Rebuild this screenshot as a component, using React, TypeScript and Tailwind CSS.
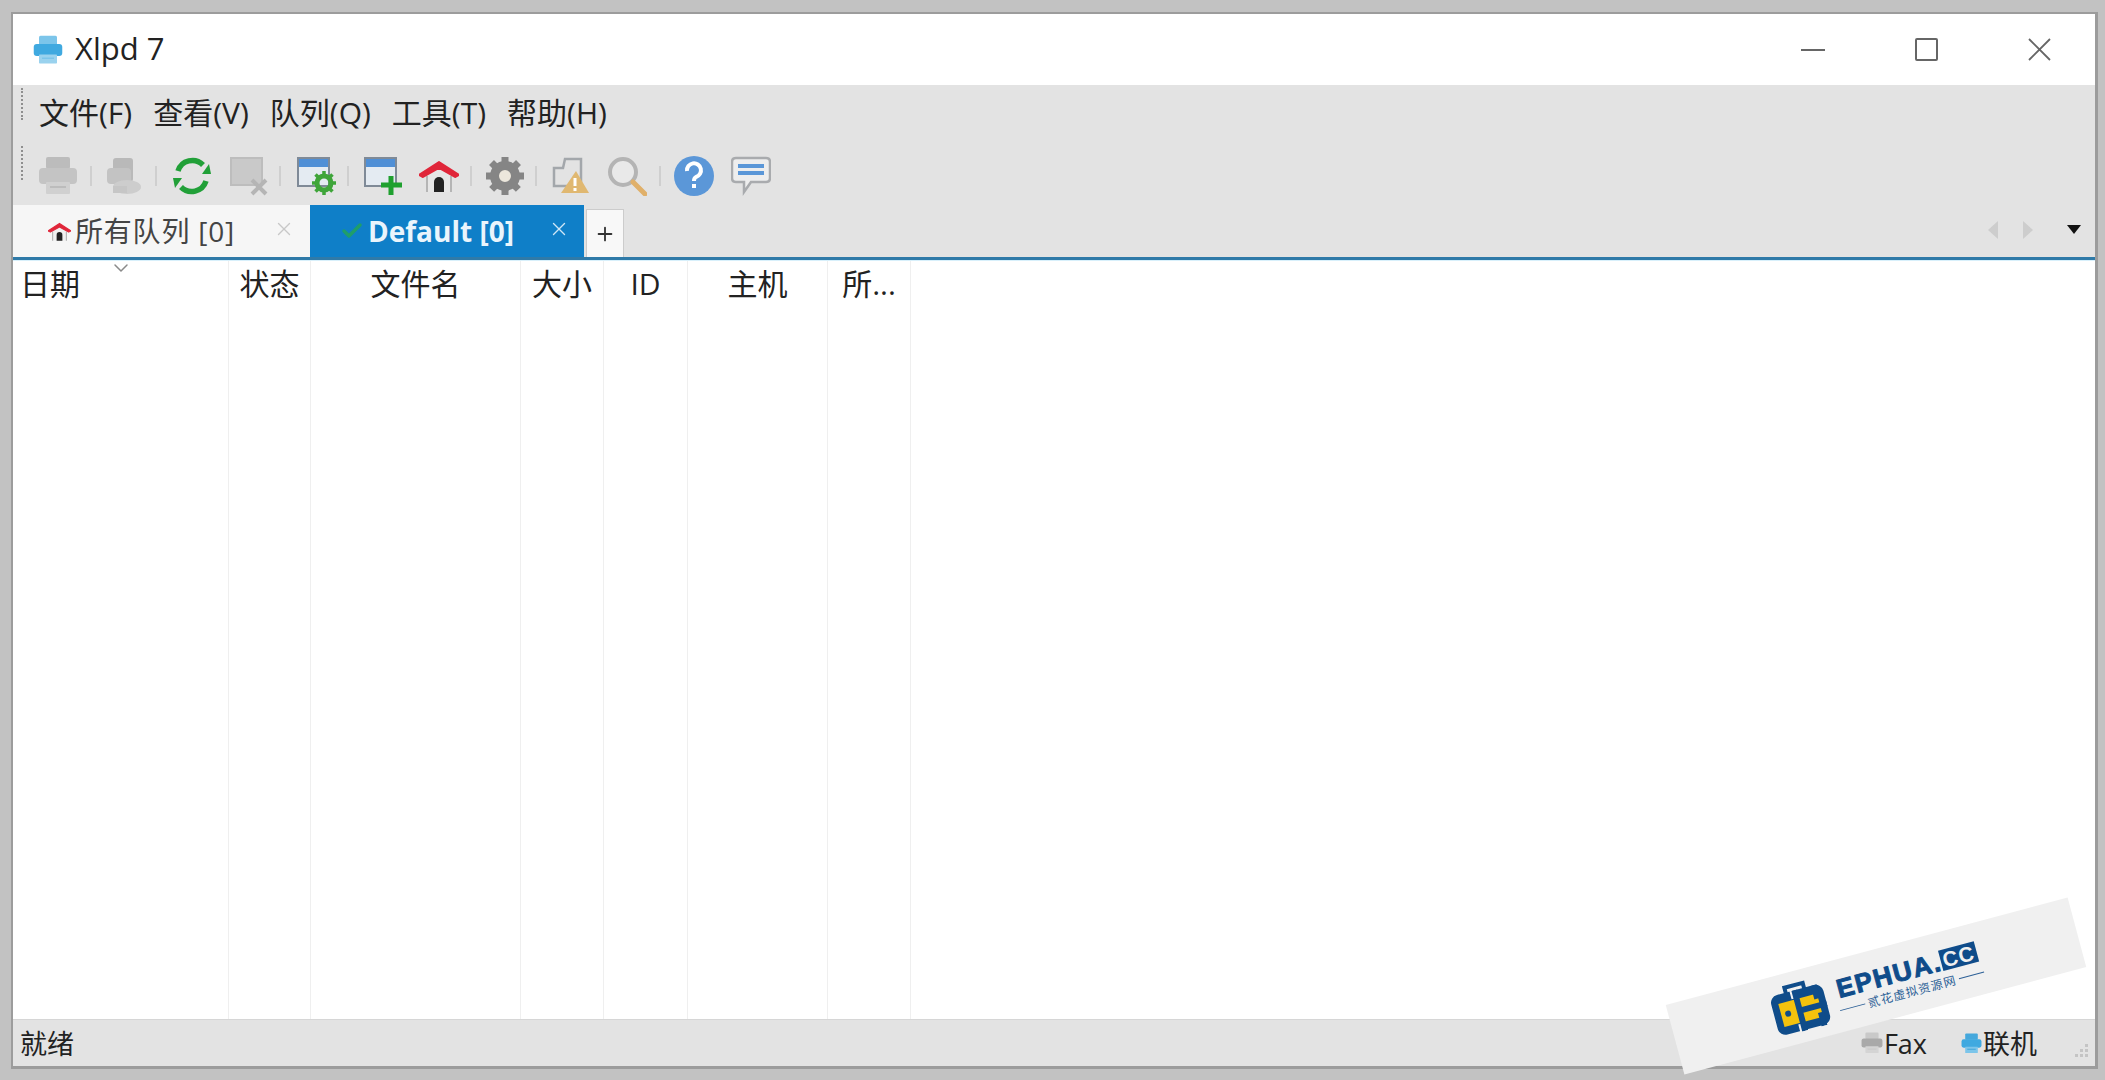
import React from 'react';
import { Check, ChevronDown, Plus, X } from 'lucide-react';

const FONT = '"Open Sans", "Noto Sans CJK SC", sans-serif';

const PrinterIcon = ({ size = 40, body = '#c4c4c4', top = '#bcbcbc', paper = '#d0d0d0' }: { size?: number; body?: string; top?: string; paper?: string }) => (
    <svg width={size} height={size} viewBox="0 0 40 40">
        <rect x="8" y="1" width="24" height="12" rx="2" fill={top} />
        <rect x="1" y="12" width="38" height="16" rx="4" fill={body} />
        <rect x="8" y="26" width="24" height="12" rx="1" fill={paper} />
        <rect x="12" y="30" width="16" height="2" fill={top} />
    </svg>
);

const PrintersIcon = () => (
    <svg width="40" height="40" viewBox="0 0 40 40">
        <rect x="10" y="2" width="20" height="24" rx="3" fill="#b9b9b9" />
        <rect x="4" y="12" width="24" height="16" rx="4" fill="#c3c3c3" />
        <ellipse cx="24" cy="31" rx="14" ry="7" fill="#cdcdcd" />
        <rect x="10" y="30" width="14" height="7" fill="#c6c6c6" />
    </svg>
);

const RefreshIcon = () => (
    <svg width="40" height="40" viewBox="0 0 40 40" fill="none" stroke="#21a038" strokeWidth="5.5">
        <path d="M6 15 A15 15 0 0 1 31 9" />
        <path d="M34 25 A15 15 0 0 1 9 31" />
        <path d="M30 18 L39 18 L37 8 Z" fill="#21a038" stroke="none" />
        <path d="M1 22 L10 22 L3 32 Z" fill="#21a038" stroke="none" />
    </svg>
);

const DeleteJobIcon = () => (
    <svg width="40" height="40" viewBox="0 0 40 40" fill="none">
        <rect x="1" y="2" width="31" height="27" fill="#c9c9c9" stroke="#bdbdbd" strokeWidth="2" />
        <path d="M22 24 L36 38 M36 24 L22 38" stroke="#b5b5b5" strokeWidth="4" />
    </svg>
);

const WindowBase = () => (
    <>
        <rect x="1" y="2" width="31" height="28" fill="#e4ebf2" stroke="#7f8a97" strokeWidth="2" />
        <rect x="2" y="3" width="29" height="8" fill="#4f8fd6" />
    </>
);

const WindowGearIcon = () => (
    <svg width="40" height="40" viewBox="0 0 40 40" fill="none">
        <WindowBase />
        <circle cx="27" cy="27" r="7" stroke="#3fa53a" strokeWidth="5" />
        <path d="M27 15 V39 M15 27 H39 M18.5 18.5 L35.5 35.5 M35.5 18.5 L18.5 35.5" stroke="#3fa53a" strokeWidth="3.5" strokeDasharray="4 16" />
    </svg>
);

const WindowAddIcon = () => (
    <svg width="40" height="40" viewBox="0 0 40 40" fill="none">
        <WindowBase />
        <path d="M27 20 V39 M17 29 H38" stroke="#1fa02f" strokeWidth="5" />
    </svg>
);

const HomeIcon = ({ size = 40, wall = '#e6e6e6' }: { size?: number; wall?: string }) => (
    <svg width={size} height={size} viewBox="0 0 40 40" fill="none">
        <path d="M7 19 L20 10 L33 19 V36 H7 Z" fill={wall} />
        <path d="M8 20 V36 M32 20 V36" stroke="#b5b5b5" strokeWidth="2" />
        <path d="M0 19 L20 6 L40 19 L36 21 L20 12 L4 21 Z" fill="#e0263a" stroke="#e0263a" strokeWidth="2" strokeLinejoin="round" />
        <path d="M15 36 V26 A5 5 0 0 1 25 26 V36 Z" fill="#222222" />
    </svg>
);

const GearIcon = () => (
    <svg width="40" height="40" viewBox="0 0 40 40" fill="none">
        <circle cx="20" cy="20" r="10.5" fill="#ece7dc" stroke="#858585" strokeWidth="9" />
        <path d="M20 1 V39 M1 20 H39 M6.5 6.5 L33.5 33.5 M33.5 6.5 L6.5 33.5" stroke="#858585" strokeWidth="7" strokeDasharray="7 24" />
    </svg>
);

const WarnDocIcon = () => (
    <svg width="40" height="40" viewBox="0 0 40 40" fill="none">
        <path d="M3 12 L12 12 L14 3 L30 3 V30 H3 Z" stroke="#a3a7ab" strokeWidth="2.5" />
        <path d="M25 15 L38 37 H10 Z" fill="#e0b871" />
        <path d="M24 22 V30 M24 32 V35" stroke="#fff" strokeWidth="3" />
    </svg>
);

const SearchIcon = () => (
    <svg width="40" height="40" viewBox="0 0 40 40" fill="none">
        <circle cx="16" cy="16" r="13" stroke="#b4b4b4" strokeWidth="4" fill="#e9e9e9" />
        <path d="M26 26 L38 38" stroke="#e0b06a" strokeWidth="5" strokeLinecap="round" />
    </svg>
);

const HelpIcon = () => (
    <svg width="40" height="40" viewBox="0 0 40 40">
        <circle cx="20" cy="20" r="20" fill="#5b97d8" />
        <path d="M13 15 A7 7 0 1 1 22 21 Q20 22 20 25" fill="none" stroke="#fff" strokeWidth="4" />
        <rect x="18" y="28" width="4" height="4" fill="#fff" />
    </svg>
);

const ChatIcon = () => (
    <svg width="40" height="40" viewBox="0 0 40 40" fill="none">
        <path d="M5 2 H35 Q39 2 39 6 V22 Q39 26 35 26 H20 L13 36 V26 H5 Q1 26 1 22 V6 Q1 2 5 2 Z" fill="#eeeeee" stroke="#a9abae" strokeWidth="2.5" />
        <path d="M7 10 H33 M7 17 H33" stroke="#5b97d8" strokeWidth="4" />
    </svg>
);

const Gripper = () => (
    <div className="h-full w-[2px] border-l-2 border-dotted border-[#8f8f8f]" />
);

const Sep = ({ className }: { className: string }) => (
    <div className={`w-[2px] h-[20px] bg-[#cfcfcf] ${className}`} />
);

const BriefcaseLogo = () => (
    <svg width="60" height="50" viewBox="0 0 60 50" fill="none">
        <path d="M19 9 V3 H38 V9" stroke="#0f4c8a" strokeWidth="4" />
        <rect x="2" y="8" width="54" height="41" rx="8" fill="#0f4c8a" />
        <rect x="9" y="17" width="40" height="24" fill="#f4c20d" />
        <circle cx="16" cy="29" r="3" fill="#0f4c8a" />
        <path d="M28 8 V19 M28 39 V50 M28 29 H56 M28 16 V42" stroke="#0f4c8a" strokeWidth="6" />
        <path d="M48 8 V22 M48 36 V50" stroke="#0f4c8a" strokeWidth="6" />
        <path d="M24 6 V16 M24 42 V50" stroke="#f2f2f2" strokeWidth="2" />
    </svg>
);

const columns = [
    { label: '日期', width: 'w-[216px]', align: 'pl-[7px]' },
    { label: '状态', width: 'w-[82px]', align: 'justify-center' },
    { label: '文件名', width: 'w-[210px]', align: 'justify-center' },
    { label: '大小', width: 'w-[83px]', align: 'justify-center' },
    { label: 'ID', width: 'w-[84px]', align: 'justify-center' },
    { label: '主机', width: 'w-[140px]', align: 'justify-center' },
    { label: '所...', width: 'w-[83px]', align: 'justify-center' },
];

const menus = ['文件(F)', '查看(V)', '队列(Q)', '工具(T)', '帮助(H)'];

const App = () => {
    return (
        <div
            className="relative w-[2105px] h-[1080px] overflow-hidden bg-[#c2c2c2] pt-[12px] pl-[11px] pr-[7px] pb-[11px]"
            style={{ fontFamily: FONT }}
        >
            <div className="w-full h-full flex flex-col bg-white border-t-2 border-l-2 border-r-[3px] border-b-[3px] border-[#9c9c9c]">
                {/* title bar */}
                <div className="h-[71px] shrink-0 flex items-center bg-white pl-[20px]">
                    <div className="blur-[0.4px]"><PrinterIcon size={30} body="#3fa9e0" top="#7cc5ea" paper="#9ad2ee" /></div>
                    <span className="ml-[12px] mb-[2px] text-[31px] text-[#222] leading-none">Xlpd 7</span>
                    <div className="ml-auto flex items-center pr-[44px] text-[#555]">
                        <svg width="24" height="24" viewBox="0 0 24 24"><path d="M0 12 H24" stroke="#666" strokeWidth="2" /></svg>
                        <svg width="23" height="23" viewBox="0 0 23 23" fill="none" className="ml-[90px]">
                            <rect x="1" y="1" width="21" height="21" rx="1" stroke="#666" strokeWidth="2" />
                        </svg>
                        <svg width="23" height="23" viewBox="0 0 23 23" fill="none" className="ml-[90px]">
                            <path d="M1 1 L22 22 M22 1 L1 22" stroke="#666" strokeWidth="1.8" />
                        </svg>
                    </div>
                </div>

                {/* menu bar */}
                <div className="h-[56px] shrink-0 flex bg-[#e3e3e3] pl-[8px]">
                    <div className="mt-[3px] h-[32px]"><Gripper /></div>
                    <div className="ml-[16px] flex items-center gap-[21px] pb-[1px] text-[30px] text-[#222] leading-none">
                        {menus.map((m) => <span key={m} className="whitespace-nowrap">{m}</span>)}
                    </div>
                </div>

                {/* toolbar */}
                <div className="h-[64px] shrink-0 flex items-center bg-[#e3e3e3] pl-[8px] pt-[5px]">
                    <div className="h-[34px] self-start"><Gripper /></div>
                    <div className="ml-[15px] blur-[0.7px]"><PrinterIcon /></div>
                    <Sep className="ml-[12px]" />
                    <div className="ml-[11px] blur-[0.7px]"><PrintersIcon /></div>
                    <Sep className="ml-[12px]" />
                    <div className="ml-[15px] blur-[0.3px]"><RefreshIcon /></div>
                    <div className="ml-[18px] blur-[0.5px]"><DeleteJobIcon /></div>
                    <Sep className="ml-[9px]" />
                    <div className="ml-[16px] blur-[0.3px]"><WindowGearIcon /></div>
                    <Sep className="ml-[10px]" />
                    <div className="ml-[15px] blur-[0.3px]"><WindowAddIcon /></div>
                    <div className="ml-[15px] blur-[0.3px]"><HomeIcon /></div>
                    <Sep className="ml-[11px]" />
                    <div className="ml-[13px] blur-[0.3px]"><GearIcon /></div>
                    <Sep className="ml-[10px]" />
                    <div className="ml-[14px] blur-[0.3px]"><WarnDocIcon /></div>
                    <div className="ml-[16px] blur-[0.3px]"><SearchIcon /></div>
                    <Sep className="ml-[12px]" />
                    <div className="ml-[13px] blur-[0.3px]"><HelpIcon /></div>
                    <div className="ml-[17px] blur-[0.3px]"><ChatIcon /></div>
                </div>

                {/* tab strip */}
                <div className="h-[55px] shrink-0 flex bg-[#e3e3e3] border-b-[3px] border-[#2f7aa8]">
                    <div className="w-[297px] flex items-center bg-[#f6f6f6] pl-[35px] text-[#444]">
                        <HomeIcon size={23} wall="#f0f0f0" />
                        <span className="ml-[4px] text-[28px] leading-none tracking-[0.8px] whitespace-nowrap">所有队列 [0]</span>
                        <X size={22} strokeWidth={1.5} className="ml-auto mr-[15px] mb-[4px] text-[#c8c8c8]" />
                    </div>
                    <div className="w-[274px] flex items-center bg-[#0f7fc8] pl-[30px]">
                        <Check size={24} strokeWidth={3.5} className="text-[#1f9e6a]" />
                        <span className="ml-[4px] text-[28px] font-bold text-[#eaf5fc] leading-none whitespace-nowrap">Default [0]</span>
                        <X size={22} strokeWidth={1.5} className="ml-auto mr-[14px] mb-[4px] text-[#cfe6f6]" />
                    </div>
                    <div className="ml-[2px] w-[38px] mt-[4px] flex items-center justify-center bg-[#f8f8f8] border-t border-x border-[#cccccc]">
                        <Plus size={22} strokeWidth={2} className="text-[#333]" />
                    </div>
                    <div className="ml-auto flex items-center pr-[14px] pb-[3px]">
                        <svg width="11" height="18" viewBox="0 0 11 18"><path d="M10 0 V18 L0 9 Z" fill="#cdcdcd" /></svg>
                        <svg width="11" height="18" viewBox="0 0 11 18" className="ml-[23px]"><path d="M1 0 V18 L11 9 Z" fill="#cdcdcd" /></svg>
                        <svg width="14" height="9" viewBox="0 0 14 9" className="ml-[34px]"><path d="M0 0 H14 L7 9 Z" fill="#111" /></svg>
                    </div>
                </div>

                {/* queue table */}
                <div className="flex-1 flex bg-white border-t border-[#d8f0fb]">
                    {columns.map((col) => (
                        <div key={col.label} className={`relative ${col.width} border-r border-[#efefef]`}>
                            <div className={`h-[44px] mt-[1px] flex items-center ${col.align} text-[30px] text-[#222] leading-none whitespace-nowrap`}>
                                {col.label}
                            </div>
                            {col.label === '日期' && (
                                <ChevronDown size={24} strokeWidth={1.5} className="absolute left-[96px] -top-[5px] text-[#8a8a8a]" />
                            )}
                        </div>
                    ))}
                </div>

                {/* status bar */}
                <div className="h-[47px] shrink-0 flex items-center bg-[#e3e3e3] border-t border-[#d6d6d6] pl-[7px] text-[27px] text-[#222] leading-none">
                    <span>就绪</span>
                    <div className="ml-auto flex items-center">
                        <PrinterIcon size={22} body="#a9a9a9" top="#c9c9c9" paper="#d4d4d4" />
                        <span className="ml-[1px]">Fax</span>
                        <div className="ml-[34px]"><PrinterIcon size={21} body="#3fa9e0" top="#45a8dc" paper="#7cc5ea" /></div>
                        <span className="ml-[1px]">联机</span>
                        <svg width="14" height="14" viewBox="0 0 14 14" className="ml-[38px] mr-[6px] mt-[14px]">
                            <path d="M10 1h3v3h-3z M5 6h3v3H5z M10 6h3v3h-3z M0 11h3v3H0z M5 11h3v3H5z M10 11h3v3h-3z" fill="#c4c4c4" />
                        </svg>
                    </div>
                </div>
            </div>

            {/* watermark ribbon */}
            <div className="absolute left-[1668px] top-[950px] w-[416px] h-[72px] -rotate-[15deg] bg-[#f0f0f0] flex items-center pl-[100px]">
                <BriefcaseLogo />
                <div className="ml-[7px] flex flex-col items-center">
                    <div className="relative flex items-center text-[26px] leading-none font-bold tracking-[1.6px] text-[#0f4c8a] whitespace-nowrap [-webkit-text-stroke:1px_#0f4c8a]" style={{ fontFamily: '"Liberation Sans", sans-serif' }}>
                        EPHUA.
                        <span className="bg-[#0f4c8a] px-[2px] text-[21px] tracking-[1px] text-[#f0f0f0] [-webkit-text-stroke:0]">CC</span>
                    </div>
                    <div className="mt-[3px] flex items-center text-[12px] leading-none text-[#2b5f96] whitespace-nowrap">
                        <span className="w-[26px] h-px bg-[#2b5f96]" />
                        <span className="mx-[3px] tracking-[1px]">贰花虚拟资源网</span>
                        <span className="w-[26px] h-px bg-[#2b5f96]" />
                    </div>
                </div>
            </div>
        </div>
    );
};

export default App;
